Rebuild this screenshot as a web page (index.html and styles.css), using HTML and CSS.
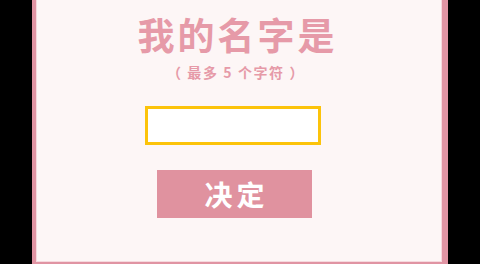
FILE: index.html
```html
<!DOCTYPE html>
<html lang="zh">
<head>
<meta charset="utf-8">
<link rel="stylesheet" href="styles.css">
</head>
<body>
<div class="stage">
  <div class="panel">
    <h1 class="title">我的名字是</h1>
    <p class="hint">（ 最多 5 个字符 ）</p>
    <div class="field"><input class="name-input" type="text"></div>
    <button class="submit">决定</button>
  </div>
</div>
</body>
</html>
```
FILE: styles.css
```css
html, body {
  margin: 0;
  padding: 0;
  background: #000;
  width: 480px;
  height: 264px;
  overflow: hidden;
  font-family: "Noto Sans CJK SC", "Noto Sans", sans-serif;
}
.stage {
  display: flex;
  padding-left: 32px;
  height: 264px;
}
.panel {
  width: 406px;
  height: 262px;
  background: #fdf6f6;
  border-left: 4px solid #e094a3;
  border-right: 6px solid #e094a3;
  border-bottom: 2px solid #e094a3;
  box-shadow: inset 1px 0 0 #f6d9de, inset -1px 0 0 #f6d9de, inset 0 -1px 0 #f6d9de;
  display: flex;
  flex-direction: column;
  align-items: center;
}
.title {
  margin: 12px 0 0 -6px;
  font-size: 37px;
  line-height: 44px;
  font-weight: 700;
  color: #e69aa8;
  letter-spacing: 3px;
  padding-left: 3px;
}
.hint {
  margin: 7px 0 0 -6px;
  font-size: 14px;
  line-height: 18px;
  font-weight: 700;
  color: #e69aa8;
  letter-spacing: 1.6px;
}
.field {
  margin-top: 25px;
  margin-left: -12px;
}
.name-input {
  display: block;
  box-sizing: border-box;
  width: 176px;
  height: 39px;
  border: 3px solid #fcc30a;
  background: #fff;
  outline: none;
  padding: 0;
}
.submit {
  margin-top: 25px;
  margin-left: -9px;
  width: 155px;
  height: 48px;
  border: none;
  background: #e0929f;
  color: #fff;
  font-family: "Noto Sans CJK SC", "Noto Sans", sans-serif;
  font-size: 28px;
  font-weight: 700;
  letter-spacing: 4px;
  padding: 0 0 0 4px;
  line-height: 48px;
}
```
